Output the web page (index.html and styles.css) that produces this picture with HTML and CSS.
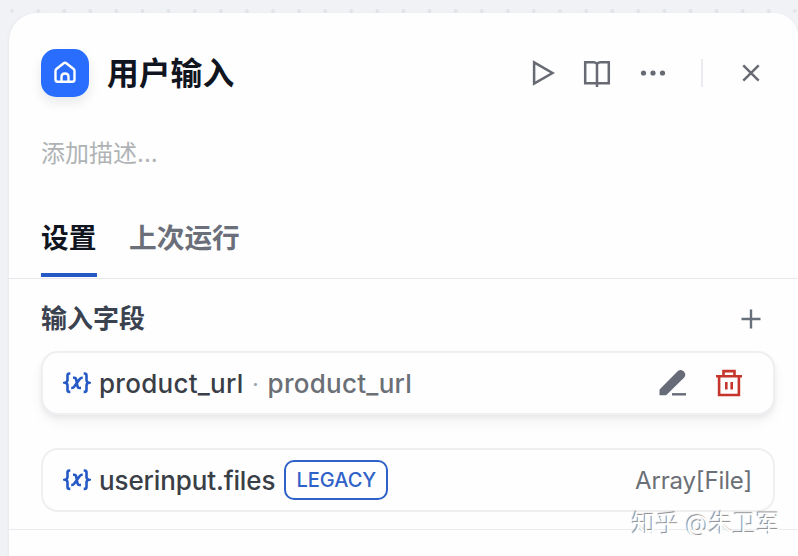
FILE: index.html
```html
<!DOCTYPE html>
<html lang="zh-CN">
<head>
<meta charset="utf-8">
<title>用户输入</title>
<link rel="stylesheet" href="styles.css">
</head>
<body>
<main class="panel">
  <header class="header">
    <div class="node-icon">
      <svg width="24" height="24" viewBox="0 0 24 24" fill="none" stroke="#fff" stroke-width="2.4" stroke-linejoin="round"><path d="M2.500 9.800Q2.500 8.700 3.400 8L10.700 2.300Q12 1.300 13.300 2.300L20.600 8Q21.500 8.700 21.500 9.800V18.500Q21.500 20.800 19.200 20.800H4.800Q2.500 20.800 2.500 18.500Z"/><path d="M8.500 20.800V15.800Q8.500 12.500 12 12.500T15.500 15.800V20.800"/></svg>
    </div>
    <h1 class="title">用户输入</h1>
    <div class="actions">
      <svg class="play" width="24" height="28" viewBox="0 0 24 28"><path d="M3.100 3.300L21.500 14L3.100 24.700Z"/></svg>
      <svg class="book" width="28" height="28" viewBox="0 0 28 28"><path d="M14 4.800Q12.500 3.200 10.500 3.200H2.200V24.300H25.800V3.200H17.500Q15.500 3.200 14 4.800V28"/></svg>
      <svg class="more" width="28" height="28" viewBox="0 0 28 28"><circle cx="4.500" cy="14" r="2.600"/><circle cx="14" cy="14" r="2.600"/><circle cx="23.500" cy="14" r="2.600"/></svg>
      <span class="divider"></span>
      <svg class="close" width="20" height="20" viewBox="0 0 20 20"><path d="M2.300 2.300L17.700 17.700M17.700 2.300L2.300 17.700"/></svg>
    </div>
  </header>
  <p class="description">添加描述...</p>
  <nav class="tabs">
    <span class="tab active">设置</span>
    <span class="tab">上次运行</span>
  </nav>
  <section class="fields">
    <div class="section-head">
      <h2>输入字段</h2>
      <svg width="20" height="20" viewBox="0 0 20 20"><path d="M10 .5V19.500M.5 10H19.500"/></svg>
    </div>
    <div class="field raised">
      <svg class="var" width="28" height="24" viewBox="0 0 28 24"><path d="M7.300 2.500H6.500Q4.500 2.500 4.500 4.500V9Q4.500 11 2.200 11.700Q4.500 12.400 4.500 14.400V18.900Q4.500 20.900 6.500 20.900H7.300M20.700 2.500H21.500Q23.500 2.500 23.500 4.500V9Q23.500 11 25.800 11.700Q23.500 12.400 23.500 14.400V18.900Q23.500 20.900 21.500 20.900H20.700M10 6.800H11.400Q12.700 6.800 13.100 8.200L14.500 15.400Q14.900 17 16.300 17H18M19.700 6.800H18.900Q17.700 6.800 16.800 8L11.100 15.800Q10.200 17 9 17H8.200"/></svg>
      <span class="name key">product_url</span>
      <span class="dot">·</span>
      <span class="label key">product_url</span>
      <div class="field-actions">
        <svg width="28" height="28" viewBox="0 0 28 28"><path d="M.5 26.300V21.500Q.5 20.500 1.300 19.700L18.900 2.100Q21.900-.4 24.900 2.500Q27.600 5.700 25.200 8.400L7.900 25.400Q6.900 26.300 5.800 26.300Z" fill="#676b78"/><path d="M13 25.300H27" stroke="#676b78" stroke-width="2.400"/></svg>
        <svg width="28" height="28" viewBox="0 0 28 28" fill="none" stroke="#c5352c" stroke-width="2.600"><path d="M1 7.300H27M4.100 7.300V26H23.900V7.300M8.500 7V2.100H19.500V7M11.300 13V20.500M16.700 13V20.500"/></svg>
      </div>
    </div>
    <div class="field">
      <svg class="var" width="28" height="24" viewBox="0 0 28 24"><path d="M7.300 2.500H6.500Q4.500 2.500 4.500 4.500V9Q4.500 11 2.200 11.700Q4.500 12.400 4.500 14.400V18.900Q4.500 20.900 6.500 20.900H7.300M20.700 2.500H21.500Q23.500 2.500 23.500 4.500V9Q23.500 11 25.800 11.700Q23.500 12.400 23.500 14.400V18.900Q23.500 20.900 21.500 20.900H20.700M10 6.800H11.400Q12.700 6.800 13.100 8.200L14.500 15.400Q14.900 17 16.300 17H18M19.700 6.800H18.900Q17.700 6.800 16.800 8L11.100 15.800Q10.200 17 9 17H8.200"/></svg>
      <span class="name">userinput.files</span>
      <span class="badge">LEGACY</span>
      <span class="type">Array[File]</span>
    </div>
  </section>
  <div class="watermark">知乎 @朱卫军</div>
</main>
</body>
</html>
```

FILE: styles.css
```css
* { box-sizing: border-box; }
body {
  margin: 0;
  height: 556px;
  overflow: hidden;
  padding: 13px 0 0 9px;
  background-color: #f1f2f5;
  background-image: radial-gradient(circle, #e2e4e9 1.500px, transparent 2.300px);
  background-size: 26.100px 600px;
  background-position: -1px -289px;
  font-family: Inter, "Noto Sans CJK SC", sans-serif;
}
h1, h2, p { margin: 0; }
svg { display: block; flex: none; }
.panel {
  position: relative;
  height: 543px;
  background: #fefefe;
  border-radius: 28px 24px 0 0;
  box-shadow: -1px 0 3px rgba(16, 24, 40, .04);
}
.header {
  display: flex;
  align-items: center;
  height: 120px;
  padding: 0 37px 0 32px;
}
.node-icon {
  display: grid;
  place-items: center;
  width: 48px;
  height: 48px;
  border-radius: 15px;
  background: #296dff;
  box-shadow: 0 6px 12px rgba(16, 24, 40, .09);
}
.title {
  padding-top: 2px;
  margin-left: 18px;
  font-size: 31.800px;
  font-weight: 600;
  line-height: 48px;
  color: #10151f;
}
.actions {
  display: flex;
  align-items: center;
  margin-left: auto;
  fill: none;
  stroke: #676a73;
  stroke-width: 2.500;
}
.book { margin-left: 28px; }
.more { margin-left: 28px; fill: #676a73; stroke: none; }
.divider { width: 2px; height: 28px; margin: 0 38px 0 34px; background: #e9ebee; }
.description {
  padding-left: 32px;
  margin-top: 3px;
  height: 36px;
  font-size: 24px;
  line-height: 36px;
  color: #b0b3b5;
}
.tabs {
  display: flex;
  gap: 32px;
  height: 107px;
  padding: 45px 32px 0;
  border-bottom: 1px solid #e6e8ec;
}
.tab {
  height: 60px;
  border-bottom: 4px solid transparent;
  font-size: 27.700px;
  font-weight: 600;
  line-height: 42px;
  color: #6b6f7a;
}
.tab.active { width: 56px; color: #10151f; border-color: #2559c5; }
.fields {
  height: 251px;
  padding: 20px 23px 0 32px;
  border-bottom: 1px solid #e9ebee;
}
.section-head {
  display: flex;
  align-items: center;
  justify-content: space-between;
  height: 40px;
  margin-bottom: 12px;
  padding-right: 14px;
  fill: none;
  stroke: #676f7b;
  stroke-width: 2.400;
}
h2 { font-size: 26px; font-weight: 600; line-height: 42px; color: #3a424f; }
.field {
  display: flex;
  align-items: center;
  height: 64px;
  padding: 0 20px;
  border: 2px solid #eeeff1;
  border-radius: 17px;
  background: #fefefe;
}
.raised {
  margin-bottom: 33px;
  box-shadow: 0 3px 5px rgba(16, 24, 40, .06), 0 8px 14px rgba(16, 24, 40, .04);
}
.var { margin-right: 8px; fill: none; stroke: #2559c5; stroke-width: 2.600; }
.name, .label { padding-top: 2px; font-size: 26px; font-weight: 500; line-height: 36px; letter-spacing: -.13px; }
.name { color: #3a3e47; }
.label { color: #6b6f76; }
.key { letter-spacing: .27px; }
.dot { width: 24px; padding-top: 2px; text-align: center; font-size: 24px; color: #a0a6b1; }
.field-actions { display: flex; gap: 28px; margin-left: auto; padding-right: 10px; }
.badge {
  width: 104px;
  height: 40px;
  margin-left: 9px;
  border: 2px solid #2f62c8;
  border-radius: 10px;
  font-size: 20px;
  font-weight: 500;
  line-height: 36px;
  text-align: center;
  color: #2f62c8;
}
.type { margin-left: auto; padding: 2px 1px 0 0; font-size: 24px; line-height: 36px; letter-spacing: -.15px; color: #6b6f76; }
.watermark {
  position: absolute;
  right: 18px;
  bottom: 14px;
  font-size: 23.700px;
  line-height: 36px;
  white-space: nowrap;
  color: #fff;
  text-shadow: -1px -1px 1px #888;
}
```
